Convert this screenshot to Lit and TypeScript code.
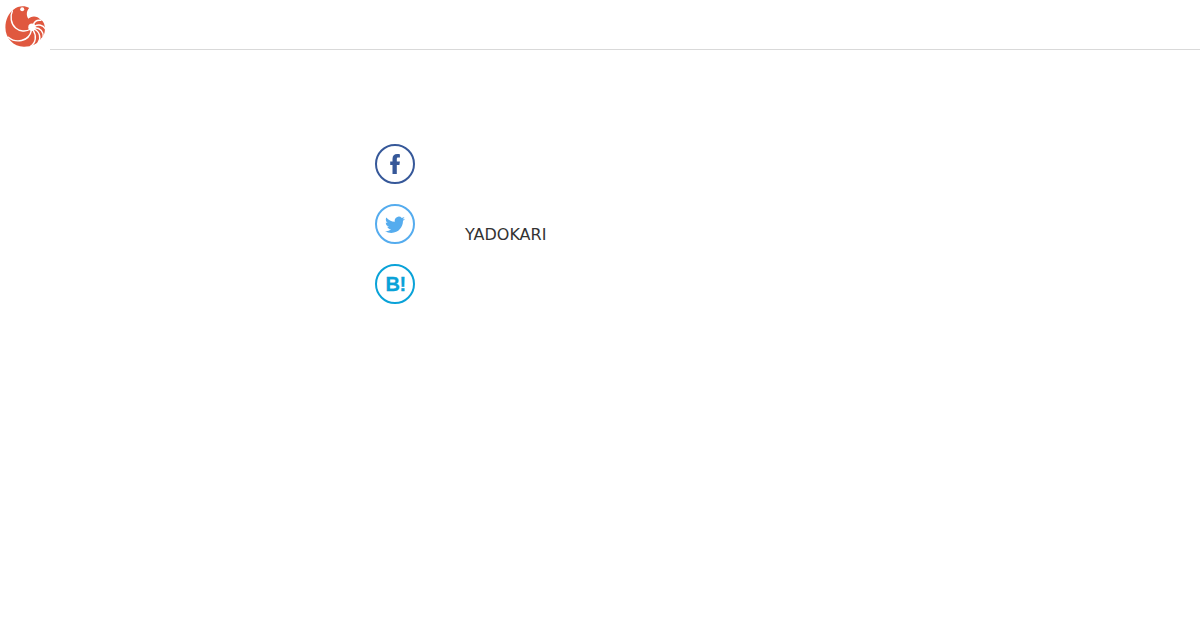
import { LitElement, html, css } from 'lit';
import { customElement, property } from 'lit/decorators.js';

@customElement('yadokari-logo')
export class YadokariLogo extends LitElement {
  static styles = css`
    :host {
      display: block;
      width: 50px;
      height: 50px;
    }

    svg {
      display: block;
    }

    .shell {
      fill: #e0583f;
    }

    .gap {
      fill: none;
      stroke: #fff;
      stroke-width: 1.4;
      stroke-linecap: round;
    }

    .hole {
      fill: #fff;
    }
  `;

  render() {
    return html`
      <svg width="50" height="50" viewBox="0 0 50 50" aria-label="YADOKARI">
        <path
          class="shell"
          d="M14 9.2C17.5 6.2 24.5 5 29.2 8C26.8 10.5 25.8 14.5 28.3 18.8C30.5 15.8 37.6 15.2 40.2 19.6C43 20.6 45 24 44.8 28.4C45.2 32 43.8 36.4 41.2 38.2C38.4 43.4 31.5 46.8 23.8 46.7C13.5 46.6 5.4 38.2 5.4 27.5C5.4 19.6 8.8 12.6 14 9.2Z"
        />
        <path class="gap" d="M12.4 11C9.9 16 10.8 23.8 15.6 28C19.4 31.4 26 32.2 30.5 29" />
        <path class="gap" d="M8.4 37.2C15 43 29 42.6 31.5 30" />
        <path class="gap" d="M30.4 46.4C36 43 36.8 36 33 30" />
        <path class="gap" d="M38.2 42.4C41.2 38 40 32 34.3 29.2" />
        <path class="gap" d="M43.2 37C43.6 31.5 40.4 28 35 27.8" />
        <path class="gap" d="M45 28.5C43 25 38.6 24 34.8 26.2" />
        <path class="gap" d="M40.8 20.4C37.5 19.9 34.4 21.6 33.4 24.8" />
        <circle class="hole" cx="32" cy="27.3" r="3.7" />
        <circle class="hole" cx="22.2" cy="9.3" r="2" />
      </svg>
    `;
  }
}

@customElement('share-button')
export class ShareButton extends LitElement {
  static styles = css`
    :host {
      display: block;
    }

    .button {
      display: flex;
      align-items: center;
      justify-content: center;
      box-sizing: border-box;
      width: 40px;
      height: 40px;
      border: 2px solid currentColor;
      border-radius: 50%;
      text-decoration: none;
    }

    .facebook {
      color: #365899;
    }

    .twitter {
      color: #55acee;
    }

    .hatena {
      color: #0aa2d8;
    }

    svg {
      display: block;
      fill: currentColor;
    }

    .mark {
      padding-left: 1px;
      font: bold 20px/1 'Liberation Sans', Arial, sans-serif;
      letter-spacing: -0.5px;
      -webkit-text-stroke: 0.3px currentColor;
    }
  `;

  @property({ type: String })
  service: 'facebook' | 'twitter' | 'hatena' = 'facebook';

  renderIcon() {
    switch (this.service) {
      case 'facebook':
        return html`
          <svg width="20" height="20" viewBox="0 0 20 20">
            <path d="M7.5 20V11H5.2V7.4H7.5V5C7.5 1.7 9.3 0 12.2 0C13.4 0 14.5.1 14.9.2V3.5H13.2C12 3.5 11.8 4.1 11.8 5V7.4H14.9L14.4 11H11.8V20Z" />
          </svg>
        `;
      case 'twitter':
        return html`
          <svg width="20" height="20" viewBox="0 -1 24 24">
            <path d="M23.953 4.57a10 10 0 01-2.825.775 4.958 4.958 0 002.163-2.723c-.951.555-2.005.959-3.127 1.184a4.92 4.92 0 00-8.384 4.482C7.69 8.095 4.067 6.13 1.64 3.162a4.822 4.822 0 00-.666 2.475c0 1.71.87 3.213 2.188 4.096a4.904 4.904 0 01-2.228-.616v.06a4.923 4.923 0 003.946 4.827 4.996 4.996 0 01-2.212.085 4.936 4.936 0 004.604 3.417 9.867 9.867 0 01-6.102 2.105c-.39 0-.779-.023-1.17-.067a13.995 13.995 0 007.557 2.209c9.053 0 13.998-7.496 13.998-13.985 0-.21 0-.42-.015-.63A9.935 9.935 0 0024 4.59z" />
          </svg>
        `;
      default:
        return html`<span class="mark">B!</span>`;
    }
  }

  render() {
    return html`<a class="button ${this.service}">${this.renderIcon()}</a>`;
  }
}

@customElement('app-root')
export class AppRoot extends LitElement {
  static styles = css`
    :host {
      display: block;
      min-height: 630px;
      background-color: #fff;
      color: #333;
      font-family: 'DejaVu Sans', sans-serif;
      font-size: 16px;
    }

    .header {
      display: flex;
      height: 50px;
    }

    .bar {
      flex: 1;
      box-sizing: border-box;
      border-bottom: 1px solid #d9d9d9;
    }

    .main {
      display: flex;
      gap: 50px;
      padding: 94px 0 0 375px;
    }

    .share {
      display: flex;
      flex-direction: column;
      gap: 20px;
    }

    .title {
      margin: 0;
      padding-top: 79px;
      font-size: 16px;
      font-weight: normal;
      line-height: 24px;
    }
  `;

  render() {
    return html`
      <header class="header">
        <yadokari-logo></yadokari-logo>
        <div class="bar"></div>
      </header>
      <main class="main">
        <nav class="share">
          <share-button service="facebook"></share-button>
          <share-button service="twitter"></share-button>
          <share-button service="hatena"></share-button>
        </nav>
        <h1 class="title">YADOKARI</h1>
      </main>
    `;
  }
}

declare global {
  interface HTMLElementTagNameMap {
    'yadokari-logo': YadokariLogo;
    'share-button': ShareButton;
    'app-root': AppRoot;
  }
}
